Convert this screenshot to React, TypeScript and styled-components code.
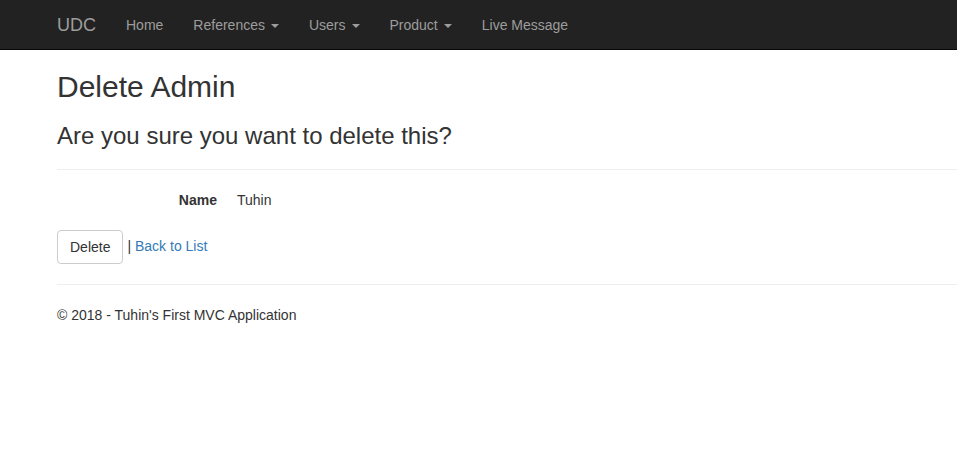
import React from "react";
import styled, { createGlobalStyle } from "styled-components";

const Global = createGlobalStyle`
  html, body { margin: 0; padding: 0; background: #fff; }
  body {
    font-family: "Liberation Sans", Arial, Helvetica, sans-serif;
    font-size: 14px;
    line-height: 1.42857143;
    color: #333;
  }
  * { box-sizing: border-box; }
`;

const Navbar = styled.nav`
  height: 50px;
  background: #222;
  border-bottom: 1px solid #080808;
`;

const NavInner = styled.div`
  display: flex;
  align-items: stretch;
  height: 49px;
  padding-left: 42px;
`;

const Brand = styled.a`
  display: block;
  padding: 15px;
  font-size: 18px;
  line-height: 20px;
  color: #9d9d9d;
  text-decoration: none;
`;

const NavList = styled.ul`
  display: flex;
  list-style: none;
  margin: 0;
  padding: 0;
`;

const NavLink = styled.a`
  display: flex;
  align-items: center;
  padding: 15px;
  line-height: 20px;
  color: #9d9d9d;
  text-decoration: none;
`;

const Caret = styled.span`
  display: inline-block;
  width: 0;
  height: 0;
  margin-left: 6px;
  margin-top: 1px;
  border-top: 4px solid #9d9d9d;
  border-left: 4px solid transparent;
  border-right: 4px solid transparent;
`;

const Body = styled.main`
  padding: 0 0 0 57px;
`;

const Title = styled.h2`
  margin: 20px 0 10px;
  font-size: 30px;
  font-weight: 500;
  line-height: 1.1;
`;

const Subtitle = styled.h3`
  margin: 20px 0 10px;
  font-size: 24px;
  font-weight: 500;
  line-height: 1.1;
`;

const Rule = styled.hr`
  margin: 20px 0;
  border: 0;
  border-top: 1px solid #eee;
  height: 0;
`;

const DefList = styled.dl`
  display: grid;
  grid-template-columns: 160px 1fr;
  column-gap: 20px;
  margin: 0 0 20px;
`;

const Term = styled.dt`
  text-align: right;
  font-weight: 700;
`;

const Desc = styled.dd`
  margin: 0;
`;

const Actions = styled.div`
  display: flex;
  align-items: center;
`;

const Button = styled.button`
  font-family: inherit;
  font-size: 14px;
  line-height: 1.42857143;
  padding: 6px 12px;
  color: #333;
  background: #fff;
  border: 1px solid #ccc;
  border-radius: 4px;
  height: 34px;
`;

const Sep = styled.span`
  margin-left: 4px;
  margin-top: -2px;
`;

const Link = styled.a`
  color: #337ab7;
  text-decoration: none;
`;

const Footer = styled.footer`
  p { margin: 0 0 10px; }
`;

export default function App() {
  return (
    <>
      <Global />
      <Navbar>
        <NavInner>
          <Brand href="#">UDC</Brand>
          <NavList>
            <li><NavLink href="#">Home</NavLink></li>
            <li><NavLink href="#">References<Caret /></NavLink></li>
            <li><NavLink href="#">Users<Caret /></NavLink></li>
            <li><NavLink href="#">Product<Caret /></NavLink></li>
            <li><NavLink href="#">Live Message</NavLink></li>
          </NavList>
        </NavInner>
      </Navbar>
      <Body>
        <Title>Delete Admin</Title>
        <Subtitle>Are you sure you want to delete this?</Subtitle>
        <Rule />
        <DefList>
          <Term>Name</Term>
          <Desc>Tuhin</Desc>
        </DefList>
        <Actions>
          <Button>Delete</Button>
          <Sep>|&nbsp;<Link href="#">Back to List</Link></Sep>
        </Actions>
        <Rule />
        <Footer>
          <p>© 2018 - Tuhin's First MVC Application</p>
        </Footer>
      </Body>
    </>
  );
}
